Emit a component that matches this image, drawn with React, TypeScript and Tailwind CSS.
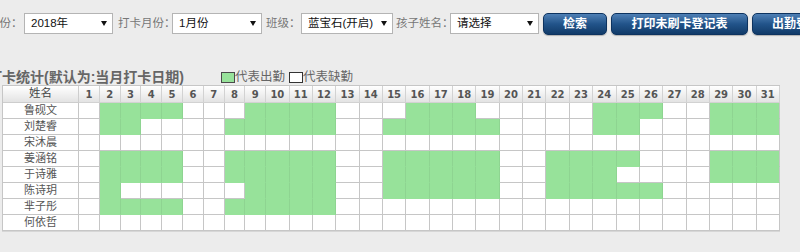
import React from "react";

// Attendance sheet: filters bar on top, then the monthly punch-card grid

const range = (a: number, b: number) => Array.from({ length: b - a + 1 }, (_, i) => a + i);

const DAYS = range(1, 31);

const students = [
    { name: "鲁砚文", days: [...range(2, 5), ...range(9, 12), ...range(16, 18), ...range(24, 26), ...range(29, 31)] },
    { name: "刘楚睿", days: [2, 3, ...range(8, 12), ...range(15, 19), 24, 25, ...range(29, 31)] },
    { name: "宋沐晨", days: [] as number[] },
    { name: "姜涵铭", days: [...range(2, 5), ...range(8, 12), ...range(15, 19), ...range(22, 25), ...range(29, 31)] },
    { name: "于诗雅", days: [...range(2, 5), ...range(8, 12), ...range(15, 19), ...range(22, 24), ...range(29, 31)] },
    { name: "陈诗玥", days: [2, ...range(9, 12), ...range(15, 19), ...range(22, 26)] },
    { name: "芈子彤", days: [...range(2, 5), ...range(8, 12)] },
    { name: "何依哲", days: [] as number[] },
];

function Arrow() {
    return (
        <svg width="6" height="5" viewBox="0 0 6 5" className="shrink-0">
            <path d="M0 0h6L3 5z" fill="#111" />
        </svg>
    );
}

function FakeSelect({ value, width }: { value: string; width: string }) {
    return (
        <div
            className={`${width} h-[21px] shrink-0 flex items-center justify-between pl-[6px] pr-[5px] bg-white border border-[#b4b4b4] text-[11.5px] text-[#111]`}
        >
            <span className="whitespace-nowrap">{value}</span>
            <Arrow />
        </div>
    );
}

function Label({ text, width, ml }: { text: string; width: string; ml: string }) {
    return (
        <span className={`${width} ${ml} shrink-0 whitespace-nowrap text-[11.5px] leading-[21px] text-[#777]`}>{text}</span>
    );
}

function BlueButton({ text, width }: { text: string; width: string }) {
    return (
        <button
            className={`${width} ml-[4px] h-[22px] shrink-0 whitespace-nowrap rounded-[5px] border border-[#0d3360] bg-linear-to-b from-[#4f80b5] via-[#22548a] to-[#113b69] text-[12px] font-bold text-white shadow-[0_1px_1px_rgba(0,0,0,0.25)]`}
        >
            {text}
        </button>
    );
}

export default function App() {
    return (
        <div className="w-[800px] h-[252px] overflow-hidden bg-[#ececec] pt-[13px] font-['Liberation_Sans','Noto_Sans_CJK_SC',sans-serif]">
            {/* Filters */}
            <div className="flex items-start -ml-[12px] h-[22px]">
                <Label text="年份：" width="w-[36px]" ml="ml-0" />
                <FakeSelect value="2018年" width="w-[89px]" />
                <Label text="打卡月份：" width="w-[54px]" ml="ml-[5px]" />
                <FakeSelect value="1月份" width="w-[90px]" />
                <Label text="班级：" width="w-[35px]" ml="ml-[4px]" />
                <FakeSelect value="蓝宝石(开启)" width="w-[92px]" />
                <Label text="孩子姓名：" width="w-[54px]" ml="ml-[3px]" />
                <FakeSelect value="请选择" width="w-[89px]" />
                <BlueButton text="检索" width="w-[64px]" />
                <BlueButton text="打印未刷卡登记表" width="w-[137px]" />
                <BlueButton text="出勤登记表" width="w-[100px]" />
            </div>

            {/* Title + legend */}
            <div className="flex items-center -ml-[12px] mt-[34px] h-[16px]">
                <span className="w-[233px] shrink-0 whitespace-nowrap text-[14px] font-bold text-[#666]">
                    打卡统计(默认为:当月打卡日期)
                </span>
                <span className="w-[14px] h-[11px] border border-[#4a4a4a] bg-[#97e29a]" />
                <span className="text-[12.5px] text-[#666] whitespace-nowrap">代表出勤</span>
                <span className="ml-[4px] w-[14px] h-[11px] border border-[#333] bg-white" />
                <span className="text-[12.5px] text-[#666] whitespace-nowrap">代表缺勤</span>
            </div>

            {/* Attendance grid */}
            <div className="ml-[2px] w-[778px] grid grid-cols-[76px_repeat(9,20.8px)_repeat(22,minmax(0,1fr))] border-l border-t border-[#c6c6c6] shadow-[0_1px_0_#d6d6d6]">
                <div className="h-[17px] flex items-center justify-center border-r border-b border-[#cdcdcd] bg-linear-to-b from-white to-[#e3e3e3] text-[11.5px] text-[#444]">
                    姓名
                </div>
                {DAYS.map((d) => (
                    <div
                        key={d}
                        className="h-[17px] flex items-center justify-center border-r border-b border-[#d2d2d2] bg-linear-to-b from-white to-[#e3e3e3] font-['DejaVu_Sans',sans-serif] text-[10px] font-bold text-[#555]"
                    >
                        {d}
                    </div>
                ))}
                {students.map((s) => (
                    <React.Fragment key={s.name}>
                        <div className="h-[16px] flex items-center justify-center border-r border-b border-[#c6c6c6] bg-white text-[11px] text-[#555]">
                            {s.name}
                        </div>
                        {DAYS.map((d) =>
                            s.days.includes(d) ? (
                                <div
                                    key={d}
                                    className={
                                        d === 31
                                            ? "h-[16px] border-r border-b border-r-[#c6c6c6] border-b-[#97e29a] bg-[#97e29a]"
                                            : "h-[16px] border-r border-b border-r-[#8ed491] border-b-[#97e29a] bg-[#97e29a]"
                                    }
                                />
                            ) : (
                                <div key={d} className="h-[16px] border-r border-b border-[#c6c6c6] bg-white" />
                            )
                        )}
                    </React.Fragment>
                ))}
            </div>
        </div>
    );
}
